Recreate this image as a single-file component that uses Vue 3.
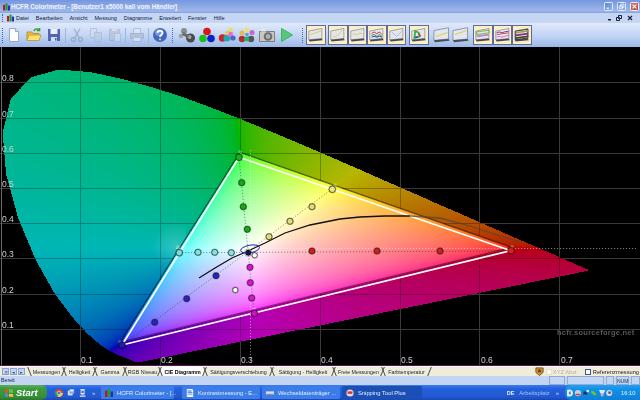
<template>
  <div class="app">
    <div class="titlebar">
      <svg class="appicon" viewBox="0 0 10 10"><path fill="#c01818" d="M0 2h3v8H0z"/><path fill="#18a030" d="M3.500 0h3v10h-3z"/><path fill="#2030b0" d="M7 3h3v7H7z"/></svg>
      <span class="title">HCFR Colorimeter - [Benutzer1 x5000 kali vom Händler]</span>
      <span class="spacer"></span>
      <span class="winbtn">
        <svg viewBox="0 0 9 9"><path fill="#fff" d="M2 6h3v1.500H2z"/></svg>
      </span>
      <span class="winbtn">
        <svg viewBox="0 0 9 9"><path fill="none" stroke="#fff" d="M3.500 1.500h4v4h-4zM1.500 3.500h4v4h-4z"/></svg>
      </span>
      <span class="winbtn close">
        <svg viewBox="0 0 9 9"><path stroke="#fff" stroke-width="1.400" d="M2 2l5 5M7 2L2 7"/></svg>
      </span>
    </div>

    <div class="menubar">
      <span class="grip small"></span>
      <svg class="appicon menuicon" viewBox="0 0 10 10"><path fill="#c01818" d="M0 2h3v8H0z"/><path fill="#18a030" d="M3.500 0h3v10h-3z"/><path fill="#2030b0" d="M7 3h3v7H7z"/></svg>
      <span v-for="m in menus" :key="m" class="menu">{{ m }}</span>
      <span class="spacer"></span>
      <svg class="mdi" viewBox="0 0 32 8">
        <path fill="#223" d="M2 5h3v1.500H2z"/>
        <path fill="none" stroke="#223" d="M12.500 1.500h3v3h-3zM10.500 3.500h3v3h-3z"/>
        <path stroke="#223" stroke-width="1.200" d="M22 2l4 4M26 2l-4 4"/>
      </svg>
    </div>

    <div class="toolbar">
      <span class="grip"></span>
      <span class="tool">
        <svg viewBox="0 0 16 16"><path fill="#fbfdff" stroke="#9aa8c2" d="M3.500 1.500h6l3 3v10h-9z"/><path fill="#d8e2f2" stroke="#9aa8c2" d="M9.500 1.500v3h3"/></svg>
      </span>
      <span class="tool">
        <svg viewBox="0 0 16 16"><path fill="#e8bc3c" stroke="#b8962c" d="M1 5h5l1 1.500h6v7H1z"/><path fill="#ffe070" stroke="#c8a23c" d="M3 8h12l-2 5.500H1z"/><path fill="none" stroke="#3aa03a" stroke-width="1.600" d="M8 4c1-2.500 3-2.500 5-1M13.500 1v2.500H11"/></svg>
      </span>
      <span class="tool">
        <svg viewBox="0 0 16 16"><path fill="#5464b4" d="M2 2h12v12H2z"/><path fill="#e8eefa" d="M4.500 2h7v5h-7z"/><path fill="#d4dcf0" d="M5 10h6v4H5z"/><path fill="#5464b4" d="M9 11h1.500v2.500H9z"/></svg>
      </span>
      <span class="sep"></span>
      <span class="tool dim narrow">
        <svg viewBox="0 0 16 16"><path fill="none" stroke="#8090a8" stroke-width="1.400" d="M5 1.500l5 9M11 1.500l-5 9"/><circle cx="4.500" cy="12.500" r="2" fill="none" stroke="#8090a8" stroke-width="1.300"/><circle cx="11.500" cy="12.500" r="2" fill="none" stroke="#8090a8" stroke-width="1.300"/></svg>
      </span>
      <span class="tool dim narrow">
        <svg viewBox="0 0 16 16"><path fill="#d4dcec" stroke="#a4b0c8" d="M2.500 1.500h6v9h-6z"/><path fill="#bcc8dc" stroke="#a4b0c8" d="M6.500 5.500h7v9h-7z"/></svg>
      </span>
      <span class="tool dim narrow">
        <svg viewBox="0 0 16 16"><path fill="#b0bcd2" stroke="#98a6c0" d="M2.500 2.500h10v11h-10z"/><path fill="#d8e0ee" d="M5 1h5v3H5z"/><path fill="#d4dcec" stroke="#a4b0c8" d="M7.500 6.500h6v8h-6z"/></svg>
      </span>
      <span class="sep"></span>
      <span class="tool dim">
        <svg viewBox="0 0 16 16"><path fill="#e4eaf4" stroke="#9aa8c0" d="M4.500 1.500h7v5h-7z"/><path fill="#a8b4ca" stroke="#8c9ab4" d="M1.500 6.500h13v5h-13z"/><path fill="#e8eef8" stroke="#9aa8c0" d="M4 10.500h8v4H4z"/></svg>
      </span>
      <span class="sep"></span>
      <span class="tool">
        <svg viewBox="0 0 16 16"><circle cx="8" cy="8" r="7" fill="#3f66c0"/><circle cx="6.500" cy="5.500" r="3.500" fill="#8aa8e8" opacity=".7"/><path fill="none" stroke="#fff" stroke-width="1.800" d="M5.500 6c0-3 5-3 5 0 0 2-2.500 2-2.500 4"/><circle cx="8" cy="12.300" r="1.100" fill="#ffd050"/></svg>
      </span>
      <span class="grip second"></span>
      <span class="tool first2">
        <svg viewBox="0 0 18 16"><circle cx="6" cy="4" r="3" fill="#8c8c8c"/><circle cx="3" cy="9" r="2.300" fill="#a0a0a0"/><circle cx="12.500" cy="11" r="4.500" fill="#4a4a48"/><circle cx="11.500" cy="10" r="2" fill="#a8a8a0"/><path fill="#6c6c6c" d="M5 5l6 3-1 3-6-3z"/></svg>
      </span>
      <span class="tool">
        <svg viewBox="0 0 18 16"><circle cx="9" cy="4.500" r="3.800" fill="#d81818"/><circle cx="5" cy="11.500" r="3.800" fill="#18c018"/><circle cx="13" cy="11.500" r="3.800" fill="#1020c8"/></svg>
      </span>
      <span class="tool">
        <svg viewBox="0 0 18 16"><circle cx="4.500" cy="11" r="3.800" fill="#c82828"/><circle cx="9" cy="11" r="3.500" fill="#20a8b0"/><circle cx="12" cy="7" r="3" fill="#e070d0"/><circle cx="12.500" cy="2.800" r="2.300" fill="#e8e060"/><circle cx="9" cy="6" r="2" fill="#f0c848"/><circle cx="15" cy="11" r="2.600" fill="#5060d0"/></svg>
      </span>
      <span class="tool">
        <svg viewBox="0 0 18 16"><circle cx="4" cy="12" r="3.200" fill="#b03030"/><circle cx="13" cy="12" r="3.200" fill="#505858"/><circle cx="8.500" cy="12" r="2.500" fill="#2ab060"/><circle cx="4" cy="6" r="2.500" fill="#e8b850"/><circle cx="9" cy="2.800" r="2.400" fill="#e8e070"/><circle cx="14" cy="5.500" r="2.500" fill="#d060d0"/><circle cx="9" cy="7.500" r="1.800" fill="#50a0e0"/></svg>
      </span>
      <span class="tool">
        <svg viewBox="0 0 18 16"><path fill="#c8c8c0" stroke="#808078" d="M1.500 4.500h15v10h-15z"/><path fill="#e8e8e0" d="M3 2h5v2.500H3z"/><circle cx="10" cy="9.500" r="4.300" fill="#6c6c68"/><circle cx="10" cy="9.500" r="2.400" fill="#a8b0b8"/></svg>
      </span>
      <span class="tool">
        <svg viewBox="0 0 16 16"><path fill="#58c878" stroke="#40b068" stroke-linejoin="round" d="M2.500 1.500l11 6.500-11 6.500z"/></svg>
      </span>
      <span class="grip third"></span>
      <div v-for="group in monitors" :key="group.at" class="mongroup" :style="{ marginLeft: group.gap + 'px' }">
        <span v-for="m in group.items" :key="m.id" class="monbtn" :class="{ on: m.on }">
          <svg viewBox="0 0 20 19">
            <path fill="#e4e6ee" stroke="#707890" stroke-width=".7" d="M2 5l15-3v11.500L2 15z"/>
            <path fill="#4a4a50" d="M2 15l15-1.500 1 2-15 1.500z"/>
            <path v-for="(line, i) in m.lines" :key="i" :d="line.d" :stroke="line.c" :stroke-width="line.w || 1" fill="none"/>
          </svg>
        </span>
      </div>
    </div>

    <div class="chart">
      <canvas ref="cv" width="640" height="318"></canvas>
      <span v-for="l in yLabels" :key="'y' + l.t" class="axis" :style="{ left: '2px', top: l.p + 'px' }">{{ l.t }}</span>
      <span v-for="l in xLabels" :key="'x' + l.t" class="axis" :style="{ left: l.p + 'px', top: '308px' }">{{ l.t }}</span>
      <span class="mark">hcfr.sourceforge.net</span>
    </div>

    <div class="tabs">
      <span class="tabnav">
        <i>✕</i><i>◂</i><i>▸</i>
      </span>
      <span v-for="t in tabs" :key="t.name" class="tab" :class="{ active: t.active }" :style="{ width: t.w + 'px' }">
        <b class="tabbg"></b>
        <em>{{ t.name }}</em>
      </span>
      <span class="spacer"></span>
      <svg class="badge" viewBox="0 0 10 10"><path fill="#c8a030" stroke="#605018" d="M1 1h8v5l-4 3.500L1 6z"/><circle cx="5" cy="4.500" r="2" fill="#a03020"/></svg>
      <span class="check off"></span><span class="chk-label off">XYZ Abst</span>
      <span class="check"></span><span class="chk-label">Referenzmessung</span>
    </div>

    <div class="status">
      <span class="ready">Bereit</span>
      <span class="spacer"></span>
      <span class="pane p1"></span>
      <span class="pane p2"></span>
      <span class="pane p3"></span>
      <span class="pane p4">NUM</span>
      <span class="pane p5"></span>
    </div>

    <div class="taskbar">
      <span class="start">
        <svg viewBox="0 0 10 10"><path fill="#e8502c" d="M0 1l4-1v4.500L0 5z"/><path fill="#6cc040" d="M5 0l5 1v4L5 4.500z"/><path fill="#4a90e8" d="M0 5.500l4 .5v4l-4-.8z"/><path fill="#f8c828" d="M5 6l5 .5V10l-5-.5z"/></svg>
        <span>Start</span>
      </span>
      <span class="quick">
        <svg viewBox="0 0 10 10"><circle cx="5" cy="5" r="5" fill="#d8402c"/><path fill="#f8c830" d="M5 5L10 5A5 5 0 0 1 3 9.500z"/><path fill="#30a048" d="M5 5L3 9.500A5 5 0 0 1 .6 2.600z"/><circle cx="5" cy="5" r="2.300" fill="#3878d8" stroke="#fff" stroke-width=".7"/></svg>
        <svg viewBox="0 0 10 10"><path fill="#d8e4f8" d="M1 2h6v6H1z"/><path fill="#88a8d8" d="M3 0h6v6H3z"/><path fill="#f0f4fc" d="M4 1h4v2H4z"/></svg>
        <svg viewBox="0 0 10 10"><path fill="#e0e8f8" d="M2 0h5v7H2z"/><path fill="#4878c8" d="M3 2h3v3H3z"/><path fill="#c0cce0" d="M1 8h7v2H1z"/></svg>
        <span class="more">»</span>
      </span>
      <span class="task t1">
        <svg viewBox="0 0 10 10"><path fill="#c01818" d="M0 2h3v8H0z"/><path fill="#18a030" d="M3.500 0h3v10h-3z"/><path fill="#2030b0" d="M7 3h3v7H7z"/></svg>
        HCFR Colorimeter - [...
      </span>
      <span class="task t2">
        <svg viewBox="0 0 10 10"><path fill="#f0f6ff" d="M1 0h7l1 2v8H1z"/><path fill="#2c70d0" d="M2 2h5v1H2zM2 4h6v1H2zM2 6h6v1H2z"/></svg>
        Kontrastmessung - E...
      </span>
      <span class="task t3">
        <svg viewBox="0 0 10 10"><path fill="#d8dce4" d="M0 3h10v4H0z"/><path fill="#707880" d="M1 6h8v1H1z"/></svg>
        Wechseldatenträger ...
      </span>
      <span class="task t4 current">
        <svg viewBox="0 0 10 10"><circle cx="5" cy="5" r="4.500" fill="#e8d8d8"/><path fill="#c83838" d="M2 3h6v3H2z"/></svg>
        Snipping Tool Plus
      </span>
      <span class="spacer"></span>
      <span class="lang">DE</span>
      <span class="desk">Arbeitsplatz</span>
      <span class="more deskmore">»</span>
      <span class="tray">
        <svg viewBox="0 0 64 10">
          <circle cx="3" cy="5" r="4.500" fill="#e8f0fc"/><path fill="#2868c8" d="M4.500 2L2 5l2.500 3z"/>
          <circle cx="14" cy="5" r="4" fill="#c8d0dc"/><path fill="#c84848" d="M11 6h6v2h-6z"/>
          <path fill="#1c3468" d="M21 3h5v4h-5z"/><path fill="#e8f0fc" d="M25 1h3v3h-3z"/>
          <path fill="#6cc828" d="M31 2l4 1 3 5-3 0-4-3z"/>
          <path fill="#e0e4e8" d="M41 1h8l-2 5h-4z"/><circle cx="45" cy="7.500" r="2" fill="#b0b8c0"/>
          <circle cx="54" cy="5" r="3.800" fill="#d8dce8"/><path fill="#3c4c7c" d="M53 3h3v3h-3z"/>
        </svg>
        <span class="clock">16:10</span>
      </span>
    </div>
  </div>
</template>

<script setup>
import { ref, onMounted } from "vue"

const cv = ref(null)

const menus = ["Datei", "Bearbeiten", "Ansicht", "Messung", "Diagramme", "Erweitert", "Fenster", "Hilfe"]

const tabs = [
  { name: "Messungen", w: 35 },
  { name: "Helligkeit", w: 31 },
  { name: "Gamma", w: 30 },
  { name: "RGB Niveau", w: 35 },
  { name: "CIE Diagramm", w: 45, active: true },
  { name: "Sättigungsverschiebung", w: 67 },
  { name: "Sättigung - Helligkeit", w: 62 },
  { name: "Freie Messungen", w: 49 },
  { name: "Farbtemperatur", w: 47 },
]

const yLabels = [8, 7, 6, 5, 4, 3, 2, 1].map((k) => ({ t: "0." + k, p: Math.round(315 - 35.2 * k) - 7 }))
const xLabels = [1, 2, 3, 4, 5, 6, 7].map((k) => ({ t: "0." + k, p: 80 * k + 1 }))

const Y = "#d8d040"
const monitors = [
  { at: 1, gap: 2, items: [{ id: 1, on: true, lines: [{ d: "M4 9l12-4", c: Y }] }] },
  {
    at: 2,
    gap: 2.5,
    items: [
      { id: 2, on: true, lines: [{ d: "M4 12c5-1 9-4 11-8", c: Y }] },
      { id: 3, on: true, lines: [{ d: "M4 9c2-2 4 1 6 0s3-2 5-1", c: Y }] },
      {
        id: 4,
        on: true,
        lines: [
          { d: "M4 8l3-2 3 2 3-2 3 3", c: "#c02828" },
          { d: "M4 10l3-1 3 2 3-2 3 2", c: "#209030" },
          { d: "M4 12l3-1 3 1 3-1 3 1", c: "#2030b0" },
        ],
      },
      { id: 5, on: true, lines: [{ d: "M4 6l6 5 6-6", c: "#b0b0d0" }] },
    ],
  },
  {
    at: 3,
    gap: 3,
    items: [
      {
        id: 6,
        on: true,
        lines: [
          { d: "M6 5l4 2 1 4-6 2z", c: "#30b040", w: 2 },
          { d: "M10 8l2 3", c: "#e02828", w: 1.600 },
          { d: "M6 12l3 0", c: "#2040d0", w: 1.600 },
        ],
      },
    ],
  },
  {
    at: 4,
    gap: 3,
    items: [
      { id: 7, lines: [{ d: "M4 11l12-4", c: Y }] },
      { id: 8, lines: [{ d: "M4 9l12-4", c: Y }] },
    ],
  },
  {
    at: 5,
    gap: 2.5,
    items: [
      {
        id: 9,
        on: true,
        lines: [
          { d: "M3 6l14-2v3L3 9z", c: "#80c060", w: 1.400 },
          { d: "M3 11l14-2", c: "#c080d0", w: 2 },
        ],
      },
      {
        id: 10,
        on: true,
        lines: [
          { d: "M3 7l3-1 3 1 3-1 5-1", c: "#802080" },
          { d: "M3 9l14-2", c: "#d04040" },
          { d: "M3 12l3-1 3 1 3-1 5-1", c: "#d060d0" },
        ],
      },
      {
        id: 11,
        on: true,
        lines: [
          { d: "M3 5l14-2v10L3 15z", c: "#303030", w: 1 },
          { d: "M3 7l14-2", c: "#a0a040", w: 1.600 },
          { d: "M3 10l14-2", c: "#803080", w: 2 },
          { d: "M3 13l14-2", c: "#504020", w: 2 },
        ],
      },
    ],
  },
]

// CIE 1931 spectral locus, 380 to 680 nm
const locus = [
  [0.1741, 0.005], [0.1733, 0.0048], [0.1714, 0.0051], [0.1689, 0.0069], [0.1644, 0.0109],
  [0.1566, 0.0177], [0.144, 0.0297], [0.1355, 0.0399], [0.1241, 0.0578], [0.1096, 0.0868],
  [0.0913, 0.1327], [0.0687, 0.2007], [0.0454, 0.295], [0.0235, 0.4127], [0.0082, 0.5384],
  [0.0039, 0.6548], [0.0139, 0.7502], [0.0389, 0.812], [0.0743, 0.8338], [0.1142, 0.8262],
  [0.1547, 0.8059], [0.1929, 0.7816], [0.2296, 0.7543], [0.2658, 0.7243], [0.3016, 0.6923],
  [0.3373, 0.6589], [0.3731, 0.6245], [0.4087, 0.5896], [0.4441, 0.5547], [0.4788, 0.5202],
  [0.5125, 0.4866], [0.5448, 0.4544], [0.5752, 0.4242], [0.6029, 0.3965], [0.627, 0.3725],
  [0.6482, 0.3514], [0.6658, 0.334], [0.6801, 0.3197], [0.6915, 0.3083], [0.7079, 0.292],
  [0.719, 0.2809], [0.726, 0.274], [0.7347, 0.2653],
]

const TOP = 47
const px = (x) => x * 800
const py = (y) => 363.6 - y * 352 - TOP

// sRGB primaries in chart pixels
const R = [px(0.64), py(0.33)]
const G = [px(0.3), py(0.6)]
const B = [px(0.15), py(0.06)]

const side = (a, b, x, y) => (b[0] - a[0]) * (y - a[1]) - (b[1] - a[1]) * (x - a[0])
const inGamut = (x, y) => side(R, G, x, y) <= 0 && side(G, B, x, y) <= 0 && side(B, R, x, y) <= 0

const colorAt = (xc, yc, gamma) => {
  const X = xc / yc
  const Z = (1 - xc - yc) / yc
  let r = 3.2406 * X - 1.5372 - 0.4986 * Z
  let g = -0.9689 * X + 1.8758 + 0.0415 * Z
  let b = 0.0557 * X - 0.204 + 1.057 * Z
  const min = Math.min(r, g, b)
  if (min < 0) {
    r -= min
    g -= min
    b -= min
  }
  const max = Math.max(r, g, b)
  return [r, g, b].map((v) => Math.pow(v / max, 1 / gamma))
}

const vGrid = new Set([1, 2, 3, 4, 5, 6, 7].map((k) => Math.round(79.9 * k)))
const hGrid = new Set([1, 2, 3, 4, 5, 6, 7, 8].map((k) => Math.round(364 - 35.2 * k) - TOP))

const poly = (ctx, pts, close) => {
  ctx.beginPath()
  pts.forEach((p, i) => (i ? ctx.lineTo(p[0], p[1]) : ctx.moveTo(p[0], p[1])))
  if (close) ctx.closePath()
}

const drawGamut = (ctx, w, h) => {
  poly(ctx, locus.map((p) => [px(p[0]), py(p[1])]), true)
  ctx.fillStyle = "#fff"
  ctx.fill()
  const img = ctx.getImageData(0, 0, w, h)
  const d = img.data
  for (let y = 0; y < h; y++) {
    for (let x = 0; x < w; x++) {
      const i = (y * w + x) * 4
      const a = d[i] / 255
      const grid = vGrid.has(x) || hGrid.has(y)
      let out = grid ? [58, 58, 58] : [0, 0, 0]
      if (x === 1) out = [104, 104, 104]
      if (a > 0) {
        const inside = inGamut(x, y)
        const c = colorAt(x / 800, (363.6 - TOP - y) / 352, inside ? 2.9 : 2.2)
        const k = inside ? 255 : grid ? 132 : 182
        out = c.map((v, n) => v * k * a + out[n] * (1 - a))
      }
      d[i] = out[0]
      d[i + 1] = out[1]
      d[i + 2] = out[2]
      d[i + 3] = 255
    }
  }
  ctx.putImageData(img, 0, 0)
}

const dot = (ctx, x, y, fill, r = 3, ring = "rgba(30,30,30,.8)") => {
  ctx.beginPath()
  ctx.arc(x, y - TOP, r + 0.8, 0, 7)
  ctx.fillStyle = "rgba(0,0,0,.25)"
  ctx.fill()
  ctx.beginPath()
  ctx.arc(x, y - TOP, r, 0, 7)
  ctx.fillStyle = fill
  ctx.fill()
  ctx.lineWidth = 0.8
  ctx.strokeStyle = ring
  ctx.stroke()
}

const drawOverlay = (ctx) => {
  const at = (pts) => pts.map((p) => [p[0], p[1] - TOP])

  // pale patch left of the cyan primary
  const glow = ctx.createRadialGradient(176, 200, 2, 176, 200, 24)
  glow.addColorStop(0, "rgba(255,255,255,.18)")
  glow.addColorStop(1, "rgba(255,255,255,0)")
  ctx.fillStyle = glow
  ctx.fillRect(150, 176, 36, 48)

  // reference triangle, dark
  poly(ctx, [R, G, B], true)
  ctx.strokeStyle = "rgba(20,20,20,.5)"
  ctx.lineWidth = 1.5
  ctx.stroke()

  // dotted guides through the white point
  ctx.lineWidth = 0.8
  ctx.setLineDash([1.2, 1.8])
  ctx.strokeStyle = "rgba(255,255,255,.6)"
  poly(ctx, at([[176, 248.5], [636, 248.5]]))
  ctx.stroke()
  poly(ctx, at([[250.5, 150], [250.5, 361]]))
  ctx.stroke()
  ctx.strokeStyle = "rgba(40,40,40,.6)"
  poly(ctx, at([[332, 189], [122, 345]]))
  ctx.stroke()
  poly(ctx, at([[239, 157], [254, 313]]))
  ctx.stroke()
  poly(ctx, at([[179, 252.7], [511, 251]]))
  ctx.stroke()
  ctx.setLineDash([])

  // measured triangle
  poly(ctx, at([[511, 250.7], [239, 157.3], [122, 345]]), true)
  ctx.strokeStyle = "#fff"
  ctx.lineWidth = 1.7
  ctx.stroke()

  // planckian locus
  poly(ctx, at([[199, 278], [215, 268], [232, 258], [248, 251], [265, 243], [285, 233], [310, 225], [340, 219], [360, 217], [385, 216], [410, 216]]))
  ctx.strokeStyle = "#101010"
  ctx.lineWidth = 1.3
  ctx.stroke()
  poly(ctx, at([[410, 216], [440, 218], [470, 226], [500, 236], [520, 242]]))
  ctx.strokeStyle = "rgba(70,70,70,.7)"
  ctx.stroke()

  // target markers
  ctx.strokeStyle = "rgba(255,255,220,.6)"
  ctx.lineWidth = 0.7
  ;[[240, 152], [512, 247], [120, 342], [178, 247], [335, 185], [254, 309]].forEach((p) => {
    ctx.strokeRect(p[0] - 1, p[1] - TOP - 1, 2, 2)
  })

  const series = [
    ["#0fae12", [[241.7, 182.7], [243.3, 206.7], [247.3, 229.3]]],
    ["#e4dc78", [[312, 206.7], [290, 221.3], [269, 236.7]]],
    ["#7ce8e4", [[198, 252.3], [214.7, 252.3], [231.3, 252.7]]],
    ["#d81c14", [[312, 251], [377, 251], [440, 251]]],
    ["#e010d8", [[250, 267.3], [250.3, 282.7], [251.7, 298]]],
    ["#2424c4", [[216, 275.7], [186.7, 298.7], [154.7, 322.3]]],
  ]
  series.forEach(([c, pts]) => pts.forEach((p) => dot(ctx, p[0], p[1], c)))

  dot(ctx, 239, 157.3, "#10b820", 3.2)
  dot(ctx, 332.3, 189.3, "#ecE680", 3.2)
  dot(ctx, 179.3, 252.7, "#70e0dc", 3.2)
  dot(ctx, 511, 250.7, "#d82020", 3.2, "rgba(90,10,10,.9)")
  dot(ctx, 254.3, 313.3, "#d010c8", 3.2, "rgba(60,0,60,.9)")
  dot(ctx, 122, 345, "#2020b0", 3.2, "rgba(10,10,70,.9)")
  dot(ctx, 235.3, 290, "#fff", 2.6)
  dot(ctx, 254.7, 255.3, "#fff", 2.6)
  dot(ctx, 248.3, 252.7, "#101010", 3.4, "rgba(255,255,255,.8)")

  // measurement ellipse
  ctx.beginPath()
  ctx.ellipse(250, 249 - TOP, 9.5, 3.8, -0.18, 0, 7)
  ctx.strokeStyle = "#1820a8"
  ctx.lineWidth = 1
  ctx.stroke()
}

onMounted(() => {
  const canvas = cv.value
  const ctx = canvas.getContext("2d", { willReadFrequently: true })
  drawGamut(ctx, canvas.width, canvas.height)
  drawOverlay(ctx)
})
</script>

<style>
html, body { margin: 0; background: #000; overflow: hidden; }
</style>

<style scoped>
.app {
  width: 640px;
  height: 400px;
  display: flex;
  flex-direction: column;
  overflow: hidden;
  font-family: "Liberation Sans", Arial, sans-serif;
  font-size: 6px;
  color: #12203c;
  filter: blur(0.3px);
}
.spacer { flex: 1; }
svg { display: block; }

.titlebar {
  height: 13px;
  flex: none;
  display: flex;
  align-items: center;
  padding: 0 1px 0 3px;
  background: linear-gradient(#7596e0, #9fb8ea 85%, #7f9fe0);
}
.appicon { width: 7px; height: 8px; flex: none; }
.title {
  margin-left: 1px;
  color: #f4f7ff;
  font-weight: bold;
  font-size: 6.300px;
  white-space: nowrap;
}
.winbtn {
  width: 9px;
  height: 9px;
  margin-left: 4px;
  background: linear-gradient(135deg, #5f86d8, #8fb0ee);
  border: 0.5px solid #e4ecfa;
  border-radius: 1.500px;
  box-sizing: border-box;
}
.winbtn.close { background: linear-gradient(135deg, #d87868, #c04838); }

.menubar {
  height: 10px;
  flex: none;
  display: flex;
  align-items: center;
  background: #c4d6f3;
  padding-left: 2px;
}
.menuicon { margin: 0 2px 0 3px; }
.menu { margin-right: 7px; white-space: nowrap; font-size: 5.500px; }
.mdi { width: 32px; height: 8px; margin-right: 2px; }

.grip {
  width: 2px;
  height: 15px;
  flex: none;
  border-left: 1px dotted #3f68b0;
  box-sizing: border-box;
}
.grip.small { height: 8px; }
.grip.second { margin-left: 2px; }
.grip.third { margin-left: 5px; }

.toolbar {
  height: 24px;
  flex: none;
  display: flex;
  align-items: center;
  padding-left: 2px;
  background: linear-gradient(#e0eafb, #bcd1f2 60%, #9ab8e8);
}
.tool {
  width: 20px;
  height: 16px;
  flex: none;
  display: flex;
  justify-content: center;
}
.tool.narrow { width: 19px; }
.tool.first2 { margin-left: 3px; }
.tool svg { height: 16px; width: auto; }
.tool.dim { opacity: 0.55; }
.sep {
  width: 1px;
  height: 15px;
  margin: 0 1px;
  background: #9fb6dc;
  flex: none;
}
.mongroup { display: flex; flex: none; }
.monbtn {
  width: 19.500px;
  height: 20px;
  box-sizing: border-box;
  flex: none;
}
.monbtn.on {
  background: #fcefc6;
  border: 1px solid #5a6ca8;
}
.monbtn svg { width: 100%; height: 100%; }

.chart {
  position: relative;
  height: 319px;
  flex: none;
  background: #000;
  border-bottom: 1px solid #5c1058;
  box-sizing: border-box;
}
.chart canvas { display: block; }
.axis {
  position: absolute;
  color: #cfcfcf;
  font-size: 8.500px;
  line-height: 10px;
}
.mark {
  position: absolute;
  left: 557px;
  top: 281px;
  color: #585858;
  font-size: 7.500px;
  font-weight: bold;
  letter-spacing: 0.25px;
}

.tabs {
  height: 10px;
  flex: none;
  display: flex;
  align-items: center;
  background: #f0ecda;
  border-top: 1px solid #fbfaf2;
  box-sizing: border-box;
  font-size: 5.300px;
}
.tabnav {
  display: flex;
  gap: 1px;
  width: 29px;
  padding-left: 2px;
  box-sizing: border-box;
  flex: none;
}
.tabnav i {
  width: 7px;
  height: 7px;
  font-style: normal;
  font-size: 5px;
  line-height: 7px;
  text-align: center;
  color: #37508c;
  background: #c6d6f2;
  border: 0.5px solid #8aa2d4;
  box-sizing: border-box;
}
.tab {
  position: relative;
  height: 100%;
  flex: none;
  display: flex;
  align-items: center;
  justify-content: center;
  white-space: nowrap;
}
.tab em { position: relative; font-style: normal; }
.tab::before, .tab::after {
  content: "";
  position: absolute;
  top: 0;
  bottom: 0;
  border-left: 0.8px solid #4a4a4a;
  z-index: 1;
}
.tab::before { left: 0; transform: skewX(22deg); }
.tab::after { right: 0; transform: skewX(-22deg); }
.tabbg { display: none; }
.tab.active .tabbg {
  display: block;
  position: absolute;
  inset: 0;
  background: #fff;
  clip-path: polygon(0 0, 100% 0, calc(100% - 3px) 100%, 3px 100%);
}
.tab.active em { font-weight: bold; color: #000; }

.badge { width: 9px; height: 9px; margin-right: 2px; }
.check {
  width: 6px;
  height: 6px;
  background: #fbfaf2;
  border: 0.5px solid #3c5a84;
  box-sizing: border-box;
  flex: none;
}
.check.off { border-color: #e4e0d0; margin-right: 1px; }
.chk-label { margin: 0 1px 0 2px; font-size: 5.700px; white-space: nowrap; color: #202020; }
.chk-label.off { margin: 0 8px 0 0; color: #b4b0a4; width: 24px; }

.status {
  height: 9px;
  flex: none;
  display: flex;
  align-items: stretch;
  background: #c3d5f2;
  font-size: 5.300px;
}
.ready { padding-left: 1px; line-height: 8px; }
.pane {
  border: 0.5px solid #94aad4;
  box-sizing: border-box;
  line-height: 8px;
  text-align: center;
  font-size: 5px;
  margin-right: 2px;
}
.p1 { width: 16px; }
.p2 { width: 37px; }
.p3 { width: 8px; }
.p4 { width: 13px; color: #203050; }
.p5 { width: 9px; margin-right: 0; }

.taskbar {
  height: 15px;
  flex: none;
  display: flex;
  align-items: center;
  color: #eaf0ff;
  background: linear-gradient(#3a7df0, #2460dc 25%, #2258d0 80%, #1a46b0);
}
.start {
  width: 47px;
  height: 15px;
  flex: none;
  display: flex;
  align-items: center;
  padding-left: 5px;
  box-sizing: border-box;
  background: linear-gradient(#5cae5c, #3c9a3e 25%, #358e38 80%, #2c7430);
  border-radius: 0 6px 6px 0;
  color: #fff;
  font-size: 9.500px;
  font-weight: bold;
  font-style: italic;
}
.start svg { width: 8px; height: 8px; margin-right: 3px; }
.quick {
  width: 47px;
  margin-left: 8px;
  display: flex;
  align-items: center;
  flex: none;
  gap: 4px;
}
.quick svg { width: 8px; height: 8px; }
.more { color: #d0dcf8; font-size: 6px; margin-left: 1px; }
.task {
  height: 13px;
  flex: none;
  display: flex;
  align-items: center;
  gap: 4px;
  padding-left: 4px;
  box-sizing: border-box;
  border-radius: 1.500px;
  background: #3b7ce8;
  white-space: nowrap;
  font-size: 5.800px;
}
.task svg { width: 8px; height: 8px; flex: none; }
.t1 { width: 73px; margin-left: -1px; }
.t2 { width: 78px; margin-left: 8px; }
.t3 { width: 78px; margin-left: 2px; }
.t4 { width: 80px; margin-left: 2px; }
.task.current { background: #1c4fb4; }
.lang { font-weight: bold; font-size: 5.500px; }
.desk { margin-left: 5px; color: #a8c0f0; font-size: 5.800px; }
.deskmore { margin-left: 6px; margin-right: 6px; }
.tray {
  width: 75px;
  height: 15px;
  flex: none;
  display: flex;
  align-items: center;
  padding-left: 2px;
  box-sizing: border-box;
  background: linear-gradient(#22a0f0, #1290e8 30%, #0f7fd8);
  border-radius: 6px 0 0 6px;
}
.tray svg { width: 50px; height: 8px; flex: none; }
.clock { margin-left: 4px; font-size: 5.800px; }
</style>
